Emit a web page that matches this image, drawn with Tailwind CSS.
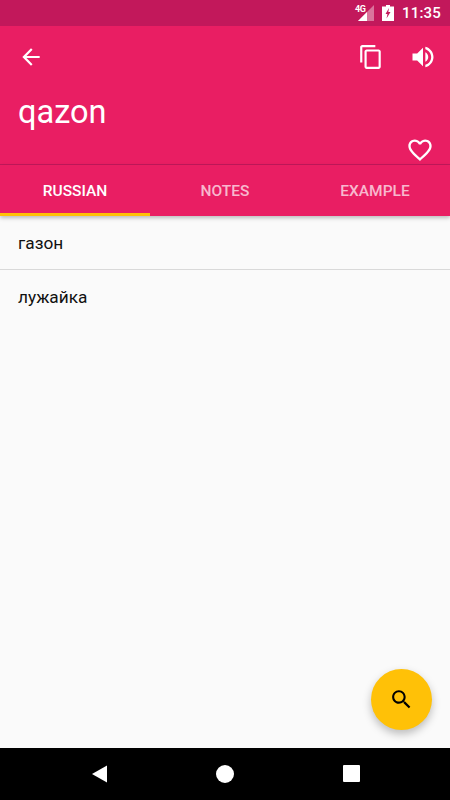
<!DOCTYPE html>
<html lang="en">
<head>
    <meta charset="UTF-8">
    <meta name="viewport" content="width=device-width, initial-scale=1.0">
    <title>qazon</title>
    <script src="https://cdn.jsdelivr.net/npm/@tailwindcss/browser@4"></script>
</head>
<body class="bg-[#fafafa] font-['Roboto',sans-serif] overflow-hidden">
    <div class="relative flex flex-col w-[450px] h-[800px]">
        <!-- status bar -->
        <div class="flex items-center justify-end h-[26px] bg-[#c2185b] text-white shrink-0">
            <svg class="w-[16px] h-[16px]" viewBox="0 0 16 16"><polygon points="16,0 16,16 0,16" fill="#fff" opacity=".4"/><polygon points="9,7 9,16 0,16" fill="#fff"/></svg>
            <svg class="w-[12px] h-[16px] ml-[8px]" viewBox="0 0 12 16"><path fill="#fff" d="M4 0h4v1.500h4V16H0V1.500h4z"/><path fill="#c2185b" d="M7 3 3.500 9h2L4.500 13.500 8.500 7H6.300z"/></svg>
            <span class="ml-[8px] mr-[9px] text-[15px] font-medium leading-none tracking-[0.2px]">11:35</span>
            <span class="absolute left-[355px] top-[4px] text-[9px] font-bold leading-[10px] tracking-[-0.3px]">4G</span>
        </div>

        <!-- app bar -->
        <div class="h-[139px] bg-[#e91e63] text-white shrink-0 border-b border-[#c2185b] flex flex-col">
            <div class="flex items-center h-[60px] pt-[2px] pl-[18px] pr-[13px]">
                <svg class="w-[26px] h-[26px]" viewBox="0 0 24 24"><path fill="#fff" d="M20 11H7.830l5.590-5.590L12 4l-8 8 8 8 1.410-1.410L7.830 13H20z"/></svg>
                <svg class="w-[26px] h-[26px] ml-auto" viewBox="0 0 24 24"><path fill="#fff" d="M16 1H4c-1.100 0-2 .9-2 2v14h2V3h12V1zm3 4H8c-1.100 0-2 .9-2 2v14c0 1.100.9 2 2 2h11c1.100 0 2-.9 2-2V7c0-1.100-.9-2-2-2zm0 16H8V7h11v14z"/></svg>
                <svg class="w-[28px] h-[28px] ml-[25px]" viewBox="0 0 24 24"><path fill="#fff" d="M3 9v6h4l5 5V4L7 9H3zm13.500 3c0-1.770-1.020-3.290-2.500-4.030v8.050c1.480-.73 2.500-2.250 2.500-4.020zM14 3.230v2.060c2.890.86 5 3.540 5 6.710s-2.110 5.850-5 6.710v2.060c4.010-.91 7-4.490 7-8.770s-2.990-7.860-7-8.770z"/></svg>
            </div>
            <div class="flex items-start justify-between pl-[18px] pr-[16px]">
                <span class="text-[32.500px] leading-[54px]">qazon</span>
                <svg class="w-[28px] h-[28px] mt-[51px]" viewBox="0 0 24 24"><path fill="#fff" d="M16.500 3c-1.740 0-3.410.81-4.500 2.090C10.910 3.810 9.240 3 7.500 3 4.420 3 2 5.420 2 8.500c0 3.780 3.400 6.860 8.550 11.540L12 21.350l1.450-1.320C18.600 15.360 22 12.280 22 8.500 22 5.420 19.580 3 16.500 3zm-4.400 15.550l-.1.100-.1-.1C7.140 14.240 4 11.390 4 8.500 4 6.500 5.500 5 7.500 5c1.540 0 3.040.99 3.570 2.360h1.870C13.460 5.990 14.960 5 16.500 5c2 0 3.500 1.500 3.500 3.500 0 2.890-3.140 5.740-7.900 10.050z"/></svg>
            </div>
        </div>

        <!-- tabs -->
        <div class="relative flex h-[51px] bg-[#e91e63] shrink-0 shadow-[0_2px_4px_rgba(0,0,0,0.25)] text-[15.500px] font-medium">
            <div class="flex-1 flex items-center justify-center text-white border-b-[3px] border-[#ffc107] pt-[5px]">RUSSIAN</div>
            <div class="flex-1 flex items-center justify-center text-white/70 pt-[2px]">NOTES</div>
            <div class="flex-1 flex items-center justify-center text-white/70 pt-[2px]">EXAMPLE</div>
        </div>

        <!-- translations -->
        <div class="flex-1 text-[17.250px] text-[#111]">
            <div class="h-[54px] flex items-center pl-[18px] pt-[2px] border-b border-[#d9d9d9]">газон</div>
            <div class="h-[56px] flex items-center pl-[18px]">лужайка</div>
        </div>

        <!-- nav bar -->
        <div class="flex items-center h-[52px] bg-black shrink-0">
            <svg class="absolute left-[91px] top-[764px] w-[18px] h-[20px]" viewBox="0 0 18 20"><path fill="#fff" d="M16 1.500v17L1 10z"/></svg>
            <div class="absolute left-[216px] top-[765px] w-[18px] h-[18px] rounded-full bg-white"></div>
            <div class="absolute left-[343px] top-[765px] w-[17px] h-[17px] rounded-[1px] bg-white"></div>
        </div>

        <!-- search fab -->
        <button class="absolute left-[371px] top-[669px] w-[61px] h-[61px] rounded-full bg-[#ffc107] flex items-center justify-center shadow-[0_4px_8px_rgba(0,0,0,0.25)]">
            <svg class="w-[25px] h-[25px]" viewBox="0 0 24 24"><path fill="#000" d="M15.500 14h-.79l-.28-.27C15.410 12.590 16 11.110 16 9.500 16 5.910 13.090 3 9.500 3S3 5.910 3 9.500 5.910 16 9.500 16c1.610 0 3.090-.59 4.230-1.570l.27.28v.79l5 4.990L20.490 19l-4.990-5zm-6 0C7.010 14 5 11.990 5 9.500S7.010 5 9.500 5 14 7.010 14 9.500 11.990 14 9.500 14z"/></svg>
        </button>
    </div>
</body>
</html>
